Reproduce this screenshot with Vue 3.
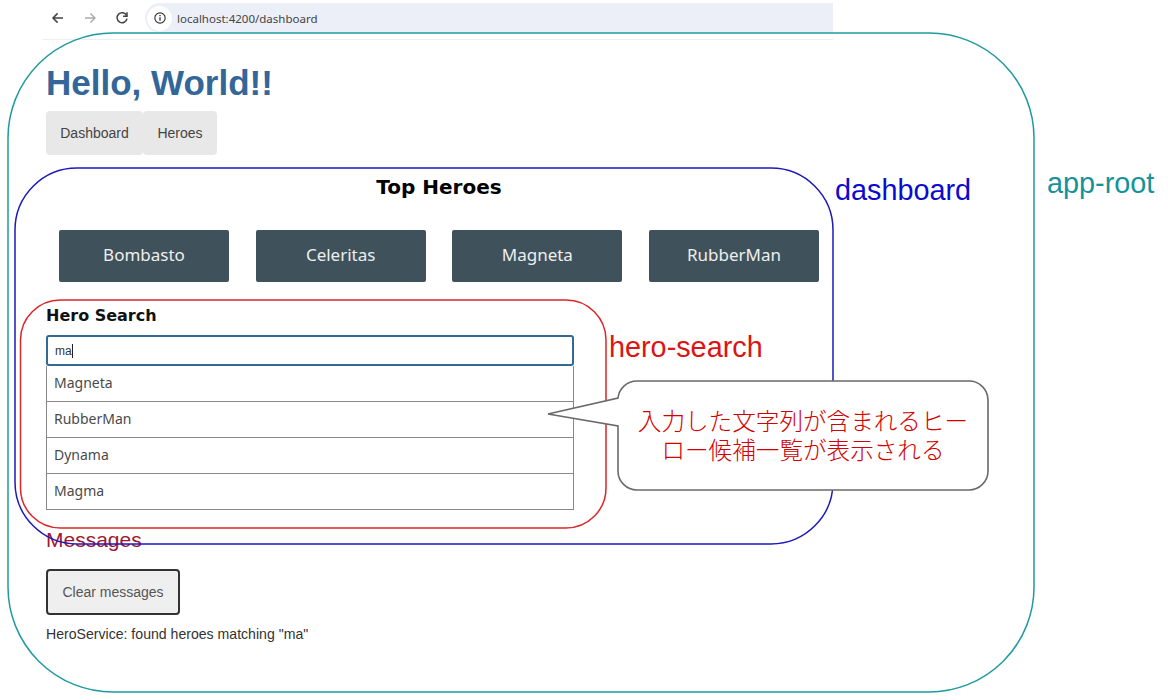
<script setup>
const topHeroes = ['Bombasto', 'Celeritas', 'Magneta', 'RubberMan']
const results = ['Magneta', 'RubberMan', 'Dynama', 'Magma']
</script>

<template>
  <div class="page">
    <header class="bar">
      <div class="nav-icons">
        <svg class="ico" viewBox="0 0 16 16" fill="none" stroke="#444" stroke-width="1.5"><path d="M13 8H3.4M7.6 3.4 3 8l4.6 4.6" /></svg>
        <svg class="ico" viewBox="0 0 16 16" fill="none" stroke="#aaa" stroke-width="1.4"><path d="M3 8h9.6M8.4 3.4 13 8l-4.6 4.6" /></svg>
        <svg class="ico" viewBox="0 0 16 16" fill="none" stroke="#444" stroke-width="1.5"><path d="M12.6 5.6A5 5 0 1 0 13 8.6" /><path d="M13 2.2v4h-4" /></svg>
      </div>
      <div class="url">
        <span class="info">
          <svg viewBox="0 0 16 16" width="14" height="14" fill="none" stroke="#333" stroke-width="1.3"><circle cx="8" cy="8" r="5.9" /><path d="M8 7.2v4" stroke-width="1.5" /><path d="M8 4.6v1.4" stroke-width="1.5" /></svg>
        </span>
        <span class="url-text">localhost:4200/dashboard</span>
      </div>
    </header>

    <main class="main">
      <h1>Hello, World!!</h1>
      <nav class="nav">
        <a>Dashboard</a>
        <a>Heroes</a>
      </nav>

      <section class="dashboard">
        <h2>Top Heroes</h2>
        <div class="heroes">
          <a v-for="h in topHeroes" :key="h" class="hero">{{ h }}</a>
        </div>
      </section>

      <section class="search">
        <h3>Hero Search</h3>
        <div class="input"><span>ma</span><i class="caret"></i></div>
        <ul>
          <li v-for="r in results" :key="r">{{ r }}</li>
        </ul>
      </section>

      <h4>Messages</h4>
      <button class="clear">Clear messages</button>
      <p class="msg">HeroService: found heroes matching "ma"</p>
    </main>

    <svg class="frames" viewBox="0 0 1168 700" width="1168" height="700" fill="none" stroke-width="1.5">
      <rect x="8" y="33" width="1026" height="659" rx="105" stroke="#1f9a9f" />
      <rect x="15" y="168" width="818" height="376" rx="62" stroke="#1c1ab8" />
      <rect x="20.5" y="300" width="585.5" height="228" rx="40" stroke="#d9262a" />
    </svg>
    <span class="label label-root">app-root</span>
    <span class="label label-dash">dashboard</span>
    <span class="label label-search">hero-search</span>

    <div class="callout">
      <svg class="callout-shape" viewBox="0 0 444 112" width="444" height="112">
        <path d="M90 1H422a19 19 0 0 1 19 19V91a19 19 0 0 1-19 19H90a19 19 0 0 1-19-19V46L1 34 71 18A19 19 0 0 1 90 1Z" fill="#fff" stroke="#6a6a6a" stroke-width="1.6" />
      </svg>
      <div class="callout-text">
        <div>入力した文字列が含まれるヒー</div>
        <div>ロー候補一覧が表示される</div>
      </div>
    </div>
  </div>
</template>

<style>
html, body { margin: 0; background: #fff; }
</style>

<style scoped>
.page {
  position: relative;
  width: 1168px;
  height: 700px;
  overflow: hidden;
  background: #fff;
  font-family: "Liberation Sans", Arial, sans-serif;
}
.bar {
  display: flex;
  align-items: flex-start;
  box-sizing: border-box;
  width: 790px;
  height: 40px;
  margin-left: 43px;
  padding-top: 3px;
  border-bottom: 1px solid #eeeef2;
}
.nav-icons {
  display: flex;
  gap: 16px;
  width: 102px;
  padding: 7px 0 0 7px;
  box-sizing: border-box;
}
.ico { width: 16px; height: 16px; display: block; }
.url {
  flex: 1;
  height: 30px;
  display: flex;
  align-items: center;
  gap: 5px;
  background: #eceff8;
  border-radius: 15px 0 0 15px;
  padding-left: 2px;
  box-sizing: border-box;
}
.info {
  width: 25px;
  height: 25px;
  border-radius: 50%;
  background: #fff;
  display: flex;
  align-items: center;
  justify-content: center;
}
.url-text {
  font-family: "Noto Sans", sans-serif;
  font-size: 11.5px;
  color: #444;
}
.main {
  margin-left: 46px;
  width: 773px;
}
h1 {
  margin: 23px 0 0;
  font-size: 35px;
  line-height: 40px;
  font-weight: 700;
  color: #369;
}
.nav { display: flex; margin-top: 8px; }
.nav a {
  display: flex;
  align-items: center;
  justify-content: center;
  height: 44px;
  background: #e8e8e8;
  border-radius: 4px;
  font-size: 14px;
  color: #444;
}
.nav a:first-child { width: 97px; }
.nav a:last-child { width: 74px; }
.dashboard { margin: 18px 0 0 13px; width: 760px; }
h2 {
  margin: 0;
  font-family: "DejaVu Sans", sans-serif;
  font-size: 20px;
  line-height: 28px;
  font-weight: 700;
  text-align: center;
  color: #000;
}
.heroes {
  display: flex;
  justify-content: space-between;
  margin-top: 29px;
}
.hero {
  display: flex;
  align-items: center;
  justify-content: center;
  box-sizing: border-box;
  width: 170px;
  height: 52px;
  padding-bottom: 3px;
  background: #3f525c;
  border-radius: 2px;
  font-family: "Noto Sans", sans-serif;
  font-size: 17px;
  color: #eee;
}
.search { margin-top: 22px; width: 528px; }
h3 {
  margin: 0;
  font-family: "DejaVu Sans", sans-serif;
  font-size: 16px;
  line-height: 24px;
  font-weight: 700;
  color: #111;
}
.input {
  display: flex;
  align-items: center;
  box-sizing: border-box;
  height: 31px;
  margin-top: 7px;
  padding-left: 7px;
  border: 2px solid #336a92;
  border-radius: 3px;
  font-size: 12px;
  color: #333;
}
.caret {
  display: block;
  width: 1px;
  height: 14px;
  background: #222;
}
ul {
  margin: 0;
  padding: 0;
  list-style: none;
  border-left: 1px solid #888;
  border-right: 1px solid #888;
}
li {
  box-sizing: border-box;
  height: 36px;
  padding: 0 0 2px 7px;
  display: flex;
  align-items: center;
  border-bottom: 1px solid #888;
  font-family: "Noto Sans", sans-serif;
  font-size: 14px;
  color: #4a4a4a;
}
h4 {
  margin: 18px 0 0;
  font-size: 21px;
  line-height: 24px;
  font-weight: 400;
  color: #a3162f;
}
.clear {
  display: block;
  width: 134px;
  height: 46px;
  margin-top: 17px;
  padding: 0;
  background: #efefef;
  border: 2px solid #333;
  border-radius: 4px;
  font-family: "Liberation Sans", Arial, sans-serif;
  font-size: 14px;
  color: #555;
}
.msg {
  margin: 10px 0 0;
  font-size: 14.1px;
  line-height: 18px;
  color: #333;
}
.frames {
  position: absolute;
  left: 0;
  top: 0;
  pointer-events: none;
}
.label {
  position: absolute;
  font-size: 28.8px;
  line-height: 34px;
  white-space: nowrap;
}
.label-root { left: 1047px; top: 166px; color: #15929a; }
.label-dash { left: 835px; top: 173px; color: #0a0ad0; }
.label-search { left: 609px; top: 330px; color: #dc1414; }
.callout {
  position: absolute;
  left: 547px;
  top: 380px;
  width: 444px;
  height: 112px;
}
.callout-shape { display: block; }
.callout-text {
  position: absolute;
  left: 71px;
  top: 26px;
  width: 370px;
  text-align: center;
  font-family: "Noto Sans CJK JP", sans-serif;
  font-size: 23.6px;
  line-height: 29px;
  font-weight: 300;
  color: #d40000;
  white-space: nowrap;
}
</style>
